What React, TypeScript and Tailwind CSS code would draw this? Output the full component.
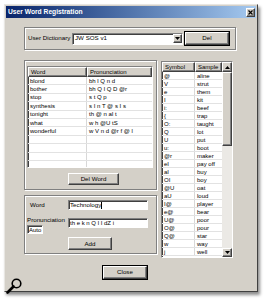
import React from "react";

const raised =
  "border border-t-white border-l-white border-b-[#404040] border-r-[#404040] shadow-[inset_-1px_-1px_0_#808080] bg-[#d4d0c8]";
const sunken =
  "border border-t-[#808080] border-l-[#808080] border-b-white border-r-white shadow-[inset_1px_1px_0_#404040] bg-white";
const group = "border border-[#808080] shadow-[inset_1px_1px_0_#fff,1px_1px_0_#fff]";

const words = [
  ["blond", "bh l Q n d"],
  ["bother", "bh Q l Q D @r"],
  ["stop", "s t Q p"],
  ["synthesis", "s I n T @ s I s"],
  ["tonight", "th @ n aI t"],
  ["what", "w h @U tS"],
  ["wonderful", "w V n d @r f @ l"],
  ["", ""],
  ["", ""],
  ["", ""],
  ["", ""],
];

const symbols = [
  ["@", "aline"],
  ["V", "strut"],
  ["e", "them"],
  ["I", "kit"],
  ["i:", "beef"],
  ["{", "trap"],
  ["O:", "taught"],
  ["Q", "lot"],
  ["U", "put"],
  ["u:", "boot"],
  ["@r", "maker"],
  ["eI", "pay off"],
  ["aI", "buy"],
  ["OI", "boy"],
  ["@U", "oat"],
  ["aU", "loud"],
  ["I@", "player"],
  ["e@", "bear"],
  ["U@", "poor"],
  ["O@", "pour"],
  ["Q@", "star"],
  ["w", "way"],
  ["j", "well"],
];

function Button({ label, className }: { label: string; className: string }) {
  return (
    <div className={`${raised} ${className} flex items-center justify-center text-[6.2px]`}>
      {label}
    </div>
  );
}

function Arrow({ up }: { up?: boolean }) {
  return (
    <svg width="5" height="3" viewBox="0 0 5 3">
      <path d={up ? "M0 3 L2.5 0 L5 3 Z" : "M0 0 L5 0 L2.5 3 Z"} fill="#000" />
    </svg>
  );
}

export default function App() {
  return (
    <div className="relative w-[268px] h-[300px] overflow-hidden bg-white text-black leading-none font-['Liberation_Sans',Arial,sans-serif]">
      <div className="ml-[4px] mt-[4px] w-[254px] h-[288px] bg-[#d4d0c8] border border-t-[#e8e6e2] border-l-[#e8e6e2] border-b-[#404040] border-r-[#404040] shadow-[2px_3px_3px_rgba(0,0,0,0.45)] p-[1px]">
        {/* title bar */}
        <div className="h-[12px] flex items-center bg-linear-to-r from-[#0a246a] to-[#a6caf0]">
          <span className="ml-[2px] text-[6.7px] font-bold text-white">User Word Registration</span>
          <div className={`${raised} ml-auto mr-[1px] w-[9px] h-[9px] flex items-center justify-center`}>
            <svg width="5" height="5" viewBox="0 0 5 5">
              <path d="M0.5 0.5 L4.5 4.5 M4.5 0.5 L0.5 4.5" stroke="#000" strokeWidth="1.2" />
            </svg>
          </div>
        </div>

        <div className="pl-[18px]">
          {/* dictionary group */}
          <div className={`${group} mt-[9px] w-[212px] h-[23px] flex items-center pl-[3px]`}>
            <span className="w-[44px] text-[6.2px]">User Dictionary</span>
            <div className={`${sunken} w-[111px] h-[12px] flex items-center`}>
              <span className="ml-[2px] text-[6.2px]">JW SOS v1</span>
              <div className={`${raised} ml-auto w-[9px] h-[9px] mr-[0.5px] flex items-center justify-center`}>
                <Arrow />
              </div>
            </div>
            <Button label="Del" className="ml-[2px] w-[44px] h-[13px] outline outline-1 outline-black" />
          </div>

          <div className="mt-[10px] flex items-start">
            {/* left column */}
            <div className="w-[133px]">
              <div className={`${group} h-[130px] pt-[5px]`}>
                <div className={`${sunken} ml-[2px] w-[126px] h-[102px] overflow-hidden`}>
                  <div className="flex h-[10px] text-[6px]">
                    <div className={`${raised} w-[59px] flex items-center pl-[2px]`}>Word</div>
                    <div className={`${raised} flex-1 flex items-center pl-[2px]`}>Pronunciation</div>
                  </div>
                  {words.map(([w, p], i) => (
                    <div key={i} className="flex h-[8.4px] border-b border-[#e2e2e2] text-[6px]">
                      <div className="w-[59px] border-r border-[#d8d8d8] pl-[2px] flex items-center">{w}</div>
                      <div className="flex-1 pl-[2px] flex items-center">{p}</div>
                    </div>
                  ))}
                </div>
                <Button label="Del Word" className="mt-[5px] ml-[43px] w-[51px] h-[12px]" />
              </div>

              <div className={`${group} mt-[5px] h-[59px] pt-[4px]`}>
                <div className="flex items-center">
                  <span className="ml-[5px] w-[38px] text-[6.2px]">Word</span>
                  <div className={`${sunken} w-[80px] h-[10px] flex items-center`}>
                    <span className="ml-[1px] text-[6.2px]">Technology</span>
                    <span className="w-[0.6px] h-[7px] bg-black" />
                  </div>
                </div>
                <div className="mt-[7px] flex items-start">
                  <div className="ml-[2px] w-[41px]">
                    <div className="text-[6.2px]">Pronunciation</div>
                    <div className={`${sunken} mt-[2px] w-[16px] h-[9px] flex items-center pl-[1px] text-[6px]`}>
                      Auto
                    </div>
                  </div>
                  <div className={`${sunken} mt-[1px] w-[80px] h-[10px] flex items-center`}>
                    <span className="ml-[1px] text-[6px]">th e k n Q l I dZ i</span>
                  </div>
                </div>
                <Button label="Add" className="mt-[3px] ml-[43px] w-[44px] h-[13px]" />
              </div>
            </div>

            {/* symbol list */}
            <div className={`${sunken} ml-[4px] mt-[1px] w-[72px] h-[197px] flex overflow-hidden`}>
              <div className="flex-1">
                <div className="flex h-[10px] text-[6px]">
                  <div className={`${raised} w-[33px] flex items-center pl-[2px]`}>Symbol</div>
                  <div className={`${raised} flex-1 flex items-center pl-[2px]`}>Sample</div>
                </div>
                {symbols.map(([s, w], i) => (
                  <div key={i} className="flex h-[8px] border-b border-[#e2e2e2] text-[6px]">
                    <div className="w-[33px] border-r border-[#d8d8d8] pl-[2px] flex items-center">{s}</div>
                    <div className="flex-1 pl-[2px] flex items-center">{w}</div>
                  </div>
                ))}
              </div>
              <div className="w-[10px] flex flex-col bg-[#ebe9e5]">
                <div className={`${raised} h-[10px] flex items-center justify-center`}>
                  <Arrow up />
                </div>
                <div className={`${raised} h-[74px]`} />
                <div className="flex-1" />
                <div className={`${raised} h-[9px] flex items-center justify-center`}>
                  <Arrow />
                </div>
              </div>
            </div>
          </div>

          <Button label="Close" className="mt-[8px] ml-[79px] w-[44px] h-[13px] outline outline-1 outline-black" />
        </div>
      </div>

      {/* magnifier */}
      <svg className="absolute left-[5px] top-[277px]" width="19" height="19" viewBox="0 0 19 19">
        <circle cx="11.5" cy="6.5" r="4.3" fill="none" stroke="#000" strokeWidth="1.6" />
        <path d="M8.5 9.5 L2.5 15.5" stroke="#000" strokeWidth="2.6" strokeLinecap="round" />
      </svg>
    </div>
  );
}
